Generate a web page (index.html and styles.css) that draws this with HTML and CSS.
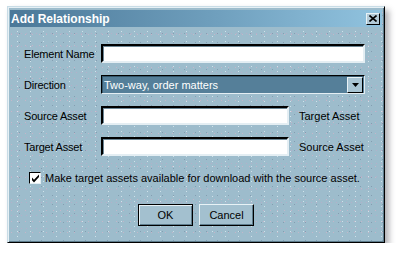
FILE: index.html
```html
<!DOCTYPE html>
<html lang="en">
<head>
  <meta charset="UTF-8" />
  <meta name="viewport" content="width=device-width, initial-scale=1" />
  <title>Add Relationship</title>
  <link rel="stylesheet" href="styles.css">
</head>
<body>
  <div class="dialog">
    <div class="titlebar">
      <span class="title">Add Relationship</span>
      <span class="close">
        <svg width="8" height="7" viewBox="0 0 8 7"><path d="M0.5 0.5L7.5 6.5M7.5 0.5L0.5 6.5" stroke="#000" stroke-width="1.6"/></svg>
      </span>
    </div>

    <div class="form">
      <label class="lbl">Element Name</label>
      <input class="field wide" type="text" />

      <label class="lbl">Direction</label>
      <div class="select wide">
        <span class="select-text">Two-way, order matters</span>
        <span class="select-btn">
          <svg width="7" height="4" viewBox="0 0 7 4"><path d="M0 0h7L3.5 4z" fill="#000"/></svg>
        </span>
      </div>

      <label class="lbl">Source Asset</label>
      <input class="field" type="text" />
      <span class="lbl side">Target Asset</span>

      <label class="lbl">Target Asset</label>
      <input class="field" type="text" />
      <span class="lbl side">Source Asset</span>
    </div>

    <div class="check-row">
      <span class="check">
        <svg width="9" height="9" viewBox="0 0 9 9"><path d="M1 3.5l2 2.3L8 0.5v2.6L3 8.5 1 6.2z" fill="#000"/></svg>
      </span>
      <span>Make target assets available for download with the source asset.</span>
    </div>

    <div class="buttons">
      <button class="btn default">OK</button>
      <button class="btn">Cancel</button>
    </div>
  </div>
</body>
</html>
```

FILE: styles.css
```css
body {
  margin: 0;
  background: #fff;
  font-family: "Liberation Sans", Arial, sans-serif;
  font-size: 11px;
  color: #000;
}
.dialog {
  box-sizing: border-box;
  width: 378px;
  height: 237px;
  margin: 6px 0 0 7px;
  padding: 3px 2px 0 2px;
  border: 1px solid;
  border-color: #c8dce6 #000 #000 #c8dce6;
  box-shadow: inset 1px 1px 0 #e6f0f5, inset -1px -1px 0 #5e7c8c, 4px 4px 6px rgba(60, 60, 70, 0.4);
  background-color: #9dbccc;
  background-image:
    radial-gradient(circle, rgba(205, 180, 200, 0.8) 0.5px, transparent 0.9px),
    radial-gradient(circle, rgba(220, 235, 242, 0.8) 0.5px, transparent 0.9px),
    radial-gradient(circle, rgba(120, 145, 165, 0.7) 0.5px, transparent 0.9px),
    radial-gradient(circle, rgba(190, 170, 200, 0.7) 0.5px, transparent 0.9px);
  background-size: 7px 11px, 13px 5px, 11px 9px, 5px 13px;
  background-position: 0 0, 3px 2px, 6px 4px, 1px 7px;
  display: flex;
  flex-direction: column;
}
.titlebar {
  height: 17px;
  display: flex;
  align-items: center;
  justify-content: space-between;
  padding: 0 2px 0 1px;
  background: linear-gradient(to right, #4b7898, #6f9fbd 55%, #91c3df);
}
.title {
  color: #fff;
  font-weight: bold;
  font-size: 12px;
}
.close {
  box-sizing: border-box;
  width: 14px;
  height: 12px;
  display: flex;
  align-items: center;
  justify-content: center;
  background: #b3cad7;
  border: 1px solid;
  border-color: #e8f2f6 #000 #000 #e8f2f6;
}
.form {
  display: grid;
  grid-template-columns: 77px 188px 76px;
  grid-auto-rows: 19px;
  row-gap: 12px;
  margin: 17px 0 0 14px;
  align-items: center;
}
.lbl {
  white-space: nowrap;
  letter-spacing: -0.2px;
}
.side {
  padding-left: 10px;
  letter-spacing: 0;
}
.wide {
  grid-column: 2 / 4;
}
.field {
  box-sizing: border-box;
  height: 19px;
  margin: 0;
  padding: 0 3px;
  background: #fff;
  border: 2px solid;
  border-color: #000 #e4eef3 #e4eef3 #000;
  box-shadow: inset 1px 1px 0 #6d8796;
  font: inherit;
  outline: none;
}
.select {
  box-sizing: border-box;
  height: 19px;
  display: flex;
  align-items: center;
  background: #557f99;
  border: 1px solid;
  border-color: #000 #e4eef3 #e4eef3 #000;
  box-shadow: inset 1px 1px 0 #34566b;
  color: #fff;
}
.select-text {
  flex: 1;
  padding-left: 2px;
}
.select-btn {
  box-sizing: border-box;
  width: 16px;
  height: 16px;
  margin-right: 1px;
  display: flex;
  align-items: center;
  justify-content: center;
  background: #a9c5d4;
  border: 1px solid;
  border-color: #e8f2f6 #000 #000 #e8f2f6;
}
.check-row {
  display: flex;
  align-items: center;
  gap: 4px;
  margin: 16px 0 0 19px;
}
.check {
  box-sizing: border-box;
  width: 12px;
  height: 12px;
  display: flex;
  align-items: center;
  justify-content: center;
  background: #fff;
  border: 1px solid;
  border-color: #000 #e4eef3 #e4eef3 #000;
}
.buttons {
  display: flex;
  justify-content: center;
  gap: 6px;
  margin-top: 20px;
}
.btn {
  box-sizing: border-box;
  width: 55px;
  height: 22px;
  padding: 0;
  font: inherit;
  color: #000;
  background: #a3c0cf;
  border: 1px solid;
  border-color: #e8f2f6 #000 #000 #e8f2f6;
  box-shadow: inset -1px -1px 0 #5e7c8c;
}
.default {
  border-color: #000;
  box-shadow: inset 1px 1px 0 #e8f2f6, inset -1px -1px 0 #5e7c8c;
}
```
